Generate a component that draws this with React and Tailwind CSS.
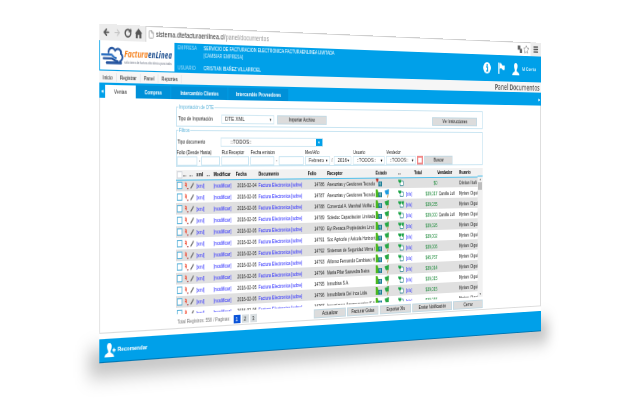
import clsx from 'clsx';
import { ArrowLeft, ArrowRight, RotateCw, File, Star, Menu } from 'lucide-react';

const BLUE_LINK = 'text-[#2222ff]';

const menuItems = ['Inicio', 'Registrar', 'Panel', 'Reportes'];

const tabs = [
    { label: 'Ventas', width: 'w-[37px]', active: true },
    { label: 'Compras', width: 'w-[44px]' },
    { label: 'Intercambio Clientes', width: 'w-[73px]' },
    { label: 'Intercambio Proveedores', width: 'w-[81px]' },
];

const columns = [
    { label: '', width: 'w-[9px]' },
    { label: '...', width: 'w-[8px]' },
    { label: '...', width: 'w-[9px]' },
    { label: 'xml', width: 'w-[13px]' },
    { label: '...', width: 'w-[9px]' },
    { label: 'Modificar', width: 'w-[29px]' },
    { label: 'Fecha', width: 'w-[30px]' },
    { label: 'Documento', width: 'w-[67px]' },
    { label: 'Folio', width: 'w-[27px]' },
    { label: 'Receptor', width: 'w-[69px]' },
    { label: 'Estado', width: 'w-[33px]' },
    { label: '...', width: 'w-[12px]' },
    { label: '', width: 'w-[12px]' },
    { label: 'Total', width: 'w-[35px]' },
    { label: 'Vendedor', width: 'w-[33px]' },
    { label: 'Usuario', width: 'w-[30px]' },
];

const rows = [
    { folio: 14786, fecha: '2016-02-04', receptor: 'Asesorias y Gestiones Tecnolo', total: '$0', usuario: 'Cristian Ibañ', pending: true },
    { folio: 14787, receptor: 'Asesorias y Gestiones Tecnolo', total: '$39,017', vendedor: 'Camila Lufi', flag: '#1e9be0' },
    { folio: 14788, receptor: 'Comercial A. Marshall Moffat L', total: '$39,035', double: true },
    { folio: 14789, receptor: 'Soleduc Capacitacion Limitada', total: '$39,000', vendedor: 'Camila Lufi' },
    { folio: 14790, receptor: 'Eyt Renaca Propiedades Limit', total: '$39,026', double: true },
    { folio: 14791, receptor: 'Soc Agricola y Avicola Horizont', total: '$39,002', double: true },
    { folio: 14792, receptor: 'Sistemas de Seguridad Mirna /', total: '$39,006' },
    { folio: 14793, receptor: 'Alfonso Fernando Cambiaso H', total: '$45,767' },
    { folio: 14794, receptor: 'Maria Pilar Saavedra Neira', total: '$39,014' },
    { folio: 14795, receptor: 'Inmobisa S.A.', total: '$39,015' },
    { folio: 14796, receptor: 'Inmobiliaria Del Inca Ltda.', total: '$39,015' },
    { folio: 14797, receptor: 'Inversiones Agropecuarias S.A', total: '$39,015' },
];

const Logo = () => (
    <div className="flex h-[27px] w-[91px] shrink-0 items-center bg-white pl-px">
        <svg viewBox="0 0 28 20" className="h-5 w-7 shrink-0" fill="none" strokeLinecap="round">
            <path d="M9 7 C9 3 14 1 17 5 C20 2 25 4 24 8 C27 10 26 14 23 15" stroke="#1d4f9c" strokeWidth="2" />
            <path d="M1 9 H12 C14 9 15 12 18 12" stroke="#2a6fc0" strokeWidth="1.8" />
            <path d="M3 12.5 H13 C15 13 16 15 20 15" stroke="#1d4f9c" strokeWidth="2" />
            <path d="M7 16.5 H24" stroke="#1d4f9c" strokeWidth="2.4" />
        </svg>
        <div className="whitespace-nowrap">
            <div className="font-['Open_Sans',sans-serif] text-[8px] leading-[12px] font-bold italic">
                <span className="text-[#f5821f]">Factura</span>
                <span className="text-[#174a8c]">enLinea</span>
            </div>
            <div className="text-[3px] leading-[4px] text-gray-500">soluciones de factura electrónica para todos</div>
        </div>
    </div>
);

const InfoIcon = () => (
    <svg viewBox="0 0 12 12" className="size-3">
        <circle cx="6" cy="6" r="6" fill="#fff" />
        <path d="M4.5 5 H6.8 V9 M4.5 9.2 H8" stroke="#00a0e9" strokeWidth="1.5" fill="none" />
        <circle cx="6.1" cy="2.9" r="1" fill="#00a0e9" />
    </svg>
);

const FlagIcon = () => (
    <svg viewBox="0 0 10 12" className="h-3 w-[10px]" fill="#fff">
        <path d="M0 0 H1.6 V12 H0 Z M2 1 C4 0 5 1 6 2.5 C7 3.5 8 3 10 3 V7.5 C8 8.5 6.5 7.5 5.5 6.5 C4.5 5.5 3 6 2 7 Z" />
    </svg>
);

const PersonIcon = ({ plus }) => (
    <svg viewBox="0 0 14 13" className="h-[13px] w-[14px]" fill="#fff">
        <path d="M6 0 C8.4 0 9 1.8 8.8 3.8 C8.7 5.4 8 6.3 7.5 7 V8.8 C8.5 9.6 11.5 10 11.8 13 H0.2 C0.5 10 3.5 9.6 4.5 8.8 V7 C4 6.3 3.3 5.4 3.2 3.8 C3 1.8 3.6 0 6 0 Z" />
        {plus && <path d="M11 4.8 H12.2 V6 H13.6 V7.4 H12.2 V8.6 H11 V7.4 H9.6 V6 H11 Z" />}
    </svg>
);

const RejectIcon = () => (
    <svg viewBox="0 0 7 9" className="h-2 w-[7px]" fill="none">
        <path d="M1 1 L3 2 V6 M3 3 L1 4" stroke="#f0452c" strokeWidth="1.2" />
        <path d="M4 7.5 H6" stroke="#a33" strokeWidth="1" />
    </svg>
);

const PencilIcon = () => (
    <svg viewBox="0 0 7 9" className="h-2 w-[7px]" fill="none">
        <path d="M1.5 7 L5.5 1.5" stroke="#666" strokeWidth="1.5" />
        <path d="M1 8 L2 6.5" stroke="#aaa" strokeWidth="1" />
    </svg>
);

const StateIcon = ({ pending, flag = '#27a844' }) => (
    <svg viewBox="0 0 24 9" className="h-[9px] w-6">
        {pending ? (
            <path d="M0 0 H4 V2 L2 4 Z" fill="#c0342b" />
        ) : (
            <path d="M0 0 H2.5 L4 3 V8 H0 Z" fill="#4cb81e" />
        )}
        <path d="M4 3 H9 V8 H4 Z" fill="#1f7d98" />
        <path d="M5 5 H8 M6.5 3.5 V7.5" stroke="#a8d8d0" strokeWidth="0.8" />
        {!pending && (
            <>
                <path d="M19 0.5 L17.5 8.5" stroke="#c08a3e" strokeWidth="1" />
                <path d="M13 1.5 L19 0 V5 L15 5.5 Z" fill={flag} />
            </>
        )}
    </svg>
);

const SyncIcon = ({ double }) => (
    <svg viewBox="0 0 9 8" className="h-2 w-[9px]">
        <path d="M0 0.5 H4.5 V4.5 L3 3.2 L2 4 L0.5 2.6 Z" fill="#1ba345" />
        <path d="M5 2 H7.5 V6.5 H3 V4.5" fill="#fff" stroke="#3f8f9a" strokeWidth="0.9" />
        {double && <path d="M5 0.5 H9 L7.5 4.5 L5.5 3 Z" fill="#1ba345" />}
    </svg>
);

const Select = ({ label, value, className }) => (
    <span className={clsx('relative block h-[9px] border border-[#d3e9f3] bg-white', className)}>
        <select aria-label={label} defaultValue={value} className="block h-[7px] w-full appearance-none pl-1 text-[6px] leading-[7px] text-[#333] outline-none">
            <option>{value}</option>
        </select>
        <span className="pointer-events-none absolute top-0 right-0.5 text-[4px] leading-[7px] text-black">▼</span>
    </span>
);

const TextField = ({ label, className }) => (
    <input type="text" aria-label={label} className={clsx('block h-[9px] border border-[#c9e5f2] bg-white outline-none', className)} />
);

const Button = ({ children, className }) => (
    <button type="button" className={clsx('h-[9px] border border-[#c3d9e3] bg-[#dcdcdc] text-center leading-[7px] whitespace-nowrap text-[#111]', className)}>
        {children}
    </button>
);

const BrowserBar = () => (
    <div className="flex h-[15px] items-center bg-[#ececec] pr-1 pl-1 text-[#555]">
        <ArrowLeft className="mr-1 size-[9px]" strokeWidth={4} />
        <ArrowRight className="mr-1 size-[9px] text-[#c4c4c4]" strokeWidth={3} />
        <RotateCw className="mr-1 size-[9px]" strokeWidth={4} />
        <svg viewBox="0 0 10 10" className="mr-1 size-[9px]" fill="#555">
            <path d="M5 0 L10 5 H8.8 V10 H6 V6.5 H4 V10 H1.2 V5 H0 Z" />
        </svg>
        <div className="flex h-[15px] flex-1 items-center border-t border-l border-[#cfcfcf] bg-white px-0.5">
            <File className="mr-0.5 size-[8px] text-[#888]" strokeWidth={2} />
            <span className="text-[7px] leading-[10px] whitespace-nowrap text-[#999]">
                <span className="text-[#333]">sistema.dtefacturaenlinea.cl</span>/panel/documentos
            </span>
            <svg viewBox="0 0 10 10" className="ml-auto size-[9px]" fill="#666">
                <path d="M0 0 H5 V5 H0 Z M4 4 H8 V9 H4 Z" />
            </svg>
            <Star className="size-[10px] text-[#888]" strokeWidth={2} />
        </div>
        <Menu className="ml-1 size-[9px]" strokeWidth={4} />
    </div>
);

const Header = () => (
    <header className="flex h-7 bg-[#00a0e9] pl-px text-white">
        <Logo />
        <dl className="grid grid-cols-[33px_1fr] content-start pt-px pl-1 whitespace-nowrap">
            <dt className="text-[#a8def9]">EMPRESA</dt>
            <dd>SERVICIO DE FACTURACION ELECTRONICA FACTURAENLINEA LIMITADA</dd>
            <dd className="col-start-2 text-[#c9ebfb]">[CAMBIAR EMPRESA]</dd>
            <dt className="pt-[5px] text-[#a8def9]">USUARIO</dt>
            <dd className="pt-[5px]">CRISTIAN IBAÑEZ VILLARROEL</dd>
        </dl>
        <div className="ml-auto flex items-center gap-3 pr-2">
            <InfoIcon />
            <FlagIcon />
            <a href="#cuenta" className="flex items-center gap-0.5 whitespace-nowrap">
                <PersonIcon />
                Mi Cuenta
            </a>
        </div>
    </header>
);

const MenuBar = () => (
    <div className="flex h-[11px] items-center bg-[#f6f6f6] pr-0.5">
        <nav className="flex leading-[8px] text-[#222]">
            {menuItems.map(item => (
                <a key={item} href={`#${item.toLowerCase()}`} className="border-r border-gray-200 pr-1 pl-1">{item}</a>
            ))}
        </nav>
        <h1 className="ml-auto font-['Open_Sans',sans-serif] text-[8px] leading-[10px] font-semibold text-[#555]">Panel Documentos</h1>
    </div>
);

const TabBar = () => (
    <div className="flex h-[14px] items-end bg-[#00a0e9] text-white">
        <span className="w-[7px] self-center text-center text-[4px]">◀</span>
        {tabs.map(tab => (
            <button
                key={tab.label}
                type="button"
                className={clsx(
                    'h-3 text-center leading-3 whitespace-nowrap',
                    tab.width,
                    tab.active ? 'bg-white text-[#222]' : 'border-r border-[#00a0e9] bg-[#0090d8] font-bold'
                )}
            >
                {tab.label}
            </button>
        ))}
        <span className="ml-auto w-[6px] self-center text-center text-[4px]">▶</span>
    </div>
);

const ImportForm = () => (
    <fieldset className="border border-[#c9e5f2] pb-0.5">
        <legend className="ml-0.5 px-px leading-[5px] text-[#5fb4da]">Importación de DTE</legend>
        <div className="flex items-center gap-1 pt-1 pr-2 pl-0.5">
            <span className="w-[51px]">Tipo de Importación</span>
            <Select label="Tipo de Importación" value="DTE XML" className="w-[70px]" />
            <Button className="w-[68px]">Importar Archivo</Button>
            <Button className="ml-auto w-[69px]">Ver Instrucciones</Button>
        </div>
    </fieldset>
);

const FilterField = ({ label, children }) => (
    <div>
        <div className="h-[7px] leading-[6px] whitespace-nowrap">{label}</div>
        <div className="flex items-center gap-0.5">{children}</div>
    </div>
);

const Filters = () => (
    <fieldset className="mt-px border border-[#c9e5f2]">
        <legend className="ml-0.5 px-px leading-[5px] text-[#5fb4da]">Filtros</legend>
        <div className="flex items-center pt-1">
            <label htmlFor="tipo-documento" className="w-14 pl-px">Tipo documento</label>
            <span className="flex h-[9px] w-[138px] border border-[#d3e9f3]">
                <select id="tipo-documento" defaultValue="::TODOS::" className="block h-[7px] flex-1 appearance-none pl-3 text-[6px] leading-[7px] outline-none">
                    <option>::TODOS::</option>
                </select>
                <span className="w-[9px] bg-[#00a0e9] text-center text-[4px] leading-[7px] text-white">▼</span>
            </span>
        </div>
        <div className="flex items-end gap-0.5 pt-0.5">
            <FilterField label="Folio (Desde Hasta)">
                <TextField label="Folio desde" className="w-[26px]" />
                -
                <TextField label="Folio hasta" className="w-[24px]" />
            </FilterField>
            <FilterField label="Rut Receptor">
                <TextField label="Rut Receptor" className="w-[36px]" />
            </FilterField>
            <FilterField label="Fecha emision">
                <TextField label="Fecha desde" className="w-8" />
                -
                <TextField label="Fecha hasta" className="w-[34px]" />
            </FilterField>
            <FilterField label="Mes/Año">
                <Select label="Mes" value="Febrero" className="w-[35px]" />
                /
                <Select label="Año" value="2016" className="w-[25px]" />
            </FilterField>
            <FilterField label="Usuario">
                <Select label="Usuario" value="::TODOS::" className="w-[46px]" />
            </FilterField>
            <FilterField label="Vendedor">
                <Select label="Vendedor" value="::TODOS::" className="w-[44px]" />
            </FilterField>
            <input type="checkbox" aria-label="Marcar" className="h-[9px] w-[9px] appearance-none border-2 border-[#f08a8a] bg-white" />
            <Button className="w-[43px]">Buscar</Button>
        </div>
    </fieldset>
);

const CheckBox = ({ label, className }) => (
    <input type="checkbox" aria-label={label} className={clsx('block size-[7px] appearance-none border bg-white', className)} />
);

const DocumentRow = ({ row, shaded }) => (
    <tr className={clsx('h-[11px]', shaded ? 'bg-[#e0e0e0]' : 'bg-white')}>
        <td><CheckBox label={`Folio ${row.folio}`} className="ml-px border-[#5fb4da]" /></td>
        <td className="pl-px"><RejectIcon /></td>
        <td><PencilIcon /></td>
        <td><a href="#xml" className={BLUE_LINK}>[xml]</a></td>
        <td />
        <td><a href="#modificar" className={BLUE_LINK}>[modificar]</a></td>
        <td className="pl-0.5">{row.fecha || '2016-02-05'}</td>
        <td><a href="#documento" className={BLUE_LINK}>Factura Electronica [sobre]</a></td>
        <td className="pr-1 text-right">{row.folio}</td>
        <td>{row.receptor}</td>
        <td><StateIcon pending={row.pending} flag={row.flag} /></td>
        <td><SyncIcon double={row.double} /></td>
        <td>{!row.pending && <a href="#xls" className={BLUE_LINK}>[xls]</a>}</td>
        <td className="text-right text-[#1d8a3a]">{row.total}</td>
        <td className="pl-0.5">{row.vendedor}</td>
        <td>{row.usuario || 'Myriam Olgui'}</td>
    </tr>
);

const DocumentTable = () => (
    <div className="mt-[3px] flex h-[136px] overflow-hidden">
        <div className="min-w-0 flex-1">
            <table className="w-full table-fixed border-collapse leading-[6px] whitespace-nowrap text-[#222]">
                <colgroup>
                    {columns.map((col, i) => <col key={i} className={col.width} />)}
                </colgroup>
                <thead>
                    <tr className="h-[9px] border-b border-[#4fc0ec] bg-[#f1f1f1] text-left text-black">
                        {columns.map((col, i) => (
                            <th key={i} className="font-bold">
                                {i === 0 ? <CheckBox label="Todos" className="ml-px border-gray-300" /> : col.label}
                            </th>
                        ))}
                    </tr>
                </thead>
                <tbody>
                    {rows.map((row, i) => <DocumentRow key={row.folio} row={row} shaded={i % 2 === 0} />)}
                </tbody>
            </table>
        </div>
        <div className="flex w-2 flex-col items-center bg-[#f1f1f1] text-[3px] leading-[6px] text-[#555]">
            <span className="h-[9px] w-full border-b border-[#4fc0ec]" />
            <span>▲</span>
            <span className="h-2 w-[6px] bg-[#bdbdbd]" />
            <span className="mt-auto">▼</span>
        </div>
    </div>
);

const TableFooter = () => (
    <div className="flex items-center justify-between pt-[3px] pb-px">
        <div className="flex items-center gap-0.5 pl-0.5 text-[#777]">
            <span className="mr-0.5 whitespace-nowrap">Total Registros: 558 / Paginas:</span>
            {[1, 2, 3].map(page => (
                <button
                    key={page}
                    type="button"
                    className={clsx('h-2 w-[9px] text-center text-[6px] leading-2', page === 1 ? 'bg-[#0a53d8] text-white' : 'bg-[#d9dfe2] text-[#333]')}
                >
                    {page}
                </button>
            ))}
        </div>
        <div className="flex gap-0.5">
            <Button className="w-[45px]">Actualizar</Button>
            <Button className="w-[45px]">Facturar Guias</Button>
            <Button className="w-[46px]">Exportar Xls</Button>
            <Button className="w-[60px]">Enviar Notificación</Button>
            <Button className="w-[46px]">Cerrar</Button>
        </div>
    </div>
);

export default function App() {
    return (
        <div className="min-h-screen overflow-hidden bg-white pt-[34px] perspective-[2700px] perspective-origin-[53%_150px]">
            {/* The whole browser window leans back to the right */}
            <div className="relative -mr-2 ml-7 rotate-y-45 font-['Liberation_Sans_Narrow','Liberation_Sans',sans-serif] text-[5px] leading-[7px] text-[#222]">
                <div className="absolute -inset-x-3 -bottom-3 h-6 bg-black/25 blur-[9px]" />
                <div className="relative bg-white">
                    <BrowserBar />
                    <Header />
                    <MenuBar />
                    <TabBar />
                    <main className="border-x border-b border-[#dcdcdc] pt-[5px]">
                        <div className="mx-auto w-[70%]">
                            <ImportForm />
                            <Filters />
                            <DocumentTable />
                            <TableFooter />
                        </div>
                    </main>
                    <footer className="mt-[5px] flex h-[22px] items-center border-b border-[#0077b3] bg-[#00a0e9] pl-1.5 text-white">
                        <a href="#recomendar" className="flex items-center gap-0.5 text-[6px] font-bold">
                            <PersonIcon plus />
                            Recomendar
                        </a>
                    </footer>
                </div>
            </div>
        </div>
    );
}
